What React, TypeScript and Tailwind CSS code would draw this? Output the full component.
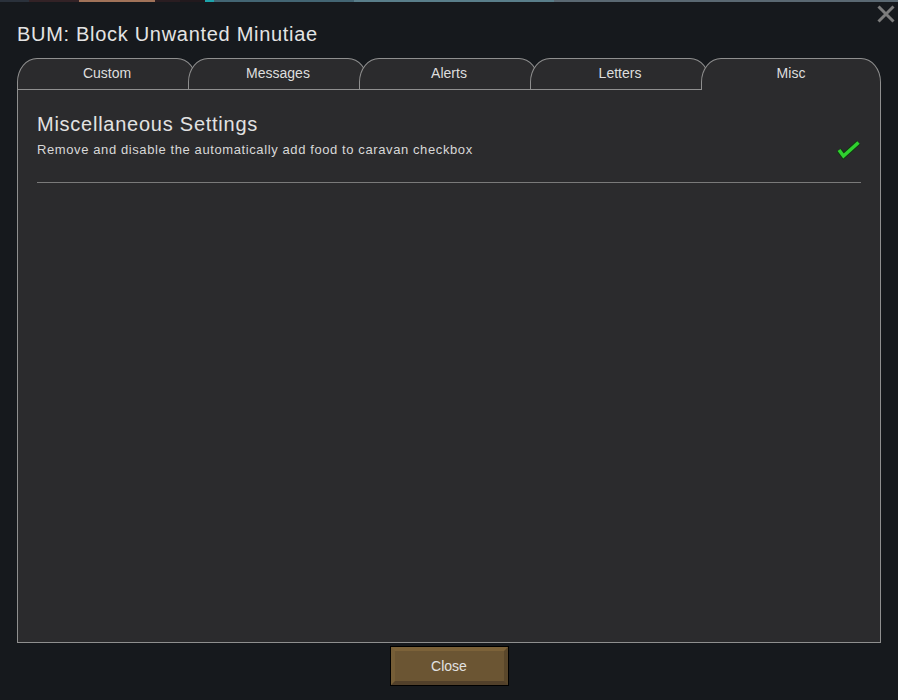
import React from "react";

const tabs = ["Custom", "Messages", "Alerts", "Letters", "Misc"];

// bits of the game world peeking above the dialog
const strip = [
	{ w: 29, c: "bg-[#2f3843]" },
	{ w: 50, c: "bg-[#3b2529]" },
	{ w: 76, c: "bg-[#c48a68]" },
	{ w: 25, c: "bg-[#2f1f23]" },
	{ w: 25, c: "bg-[#26191d]" },
	{ w: 9, c: "bg-[#1fc6cf]" },
	{ w: 140, c: "bg-[#4f7889]" },
	{ w: 200, c: "bg-[#6a98a6]" },
	{ w: 344, c: "bg-[#6b7c88]" },
];

const CheckMark = () => (
	<svg width="24" height="20" viewBox="0 0 24 20" className="shrink-0">
		<polyline
			points="2,10 6.5,16 21.5,2.5"
			fill="none"
			stroke="#123a12"
			strokeWidth="5.5"
			strokeLinejoin="miter"
		/>
		<polyline
			points="2,10 6.5,16 21.5,2.5"
			fill="none"
			stroke="#2fd12f"
			strokeWidth="3.5"
			strokeLinejoin="miter"
		/>
	</svg>
);

const App = () => {
	return (
		<main
			className="relative flex flex-col w-[898px] h-[700px] bg-[#16191d] text-[#e2e2e2] overflow-hidden"
			style={{ fontFamily: '"Liberation Sans", Arial, sans-serif' }}
		>
			<div className="flex h-[2px] shrink-0 opacity-80">
				{strip.map((s, i) => (
					<div key={i} className={s.c} style={{ width: s.w }} />
				))}
			</div>

			{/* close cross */}
			<button className="absolute right-[3px] top-[5px] w-[18px] h-[18px] text-[#7c7c7c]">
				<svg viewBox="0 0 18 18" width="18" height="18">
					<path d="M1.5 1.5 L16.5 16.5 M16.5 1.5 L1.5 16.5" stroke="currentColor" strokeWidth="3" />
				</svg>
			</button>

			<div className="flex flex-col flex-1 px-[17px] pt-[20px]">
				<h1 className="text-[20px] leading-6 tracking-[0.7px] text-[#e4e4e4]">BUM: Block Unwanted Minutiae</h1>

				<div className="flex mt-3 h-8">
					{tabs.map((tab, i) => {
						const active = tab === "Misc";
						return (
							<div
								key={tab}
								className={`flex items-center justify-center w-[180px] h-8 shrink-0 bg-[#2b2b2d] border-[#8f8f8f] border-t border-x rounded-tl-[20px_24px] rounded-tr-[20px_24px] text-[14px] text-[#dedede] ${
									active ? "border-b-0 pb-[3px]" : "border-b pb-[2px]"
								} ${i > 0 ? "-ml-[9px]" : ""}`}
							>
								{tab}
							</div>
						);
					})}
				</div>

				<section className="flex-1 bg-[#2b2b2d] border-x border-b border-[#8f8f8f] px-[19px] pt-[22px]">
					<h2 className="text-[20px] leading-6 tracking-[0.75px] text-[#e2e2e2]">Miscellaneous Settings</h2>
					<div className="flex items-center justify-between h-5 mt-1">
						<p className="text-[13px] leading-5 tracking-[0.6px] text-[#d8d8d8]">
							Remove and disable the automatically add food to caravan checkbox
						</p>
						<CheckMark />
					</div>
					<div className="h-px mt-[22px] bg-[#7a7a7a]" />
				</section>

				<div className="flex justify-center mt-[3px] mb-[14px]">
					<div className="bg-black p-px">
						<button className="flex items-center justify-center w-[117px] h-[38px] bg-[#6b5533] border-4 border-t-[#7c6239] border-l-[#765e37] border-b-[#52402a] border-r-[#5a472b] text-[14px] text-[#e2e2e2]">
							Close
						</button>
					</div>
				</div>
			</div>
		</main>
	);
};

export default App;
